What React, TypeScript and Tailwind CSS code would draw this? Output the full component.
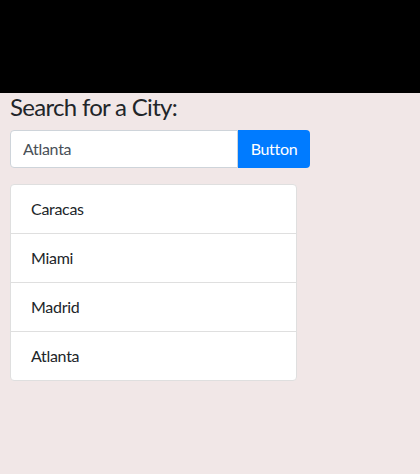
const cities = ["Caracas", "Miami", "Madrid", "Atlanta"];

export default function App() {
  return (
    <div
      className="min-h-[474px] w-full bg-[#f1e7e7] text-[#212529]"
      style={{ fontFamily: "Lato, 'Noto Sans', sans-serif" }}
    >
      <div className="h-[93px] w-full bg-black" />
      <div className="px-[10px]">
        <h2 className="mb-2 text-[24px] leading-[1.2] font-normal tracking-[-0.7px]">Search for a City:</h2>
        <div className="flex w-[300px]">
          <input
            className="h-[38px] flex-1 rounded-l-[4px] border border-[#ced4da] bg-white px-3 text-[16px] tracking-[-0.3px] text-[#495057] outline-none"
            defaultValue="Atlanta"
          />
          <button className="h-[38px] w-[72px] rounded-r-[4px] bg-[#007bff] text-[16px] tracking-[-0.3px] text-white">
            Button
          </button>
        </div>
        <ul className="mt-4 w-[287px] overflow-hidden rounded-[4px] border border-[#dfdfdf] bg-white">
          {cities.map((c, i) => (
            <li
              key={c}
              className={`px-5 text-[16px] leading-[48px] tracking-[-0.3px] ${i > 0 ? "border-t border-[#dfdfdf]" : ""}`}
            >
              {c}
            </li>
          ))}
        </ul>
      </div>
    </div>
  );
}
